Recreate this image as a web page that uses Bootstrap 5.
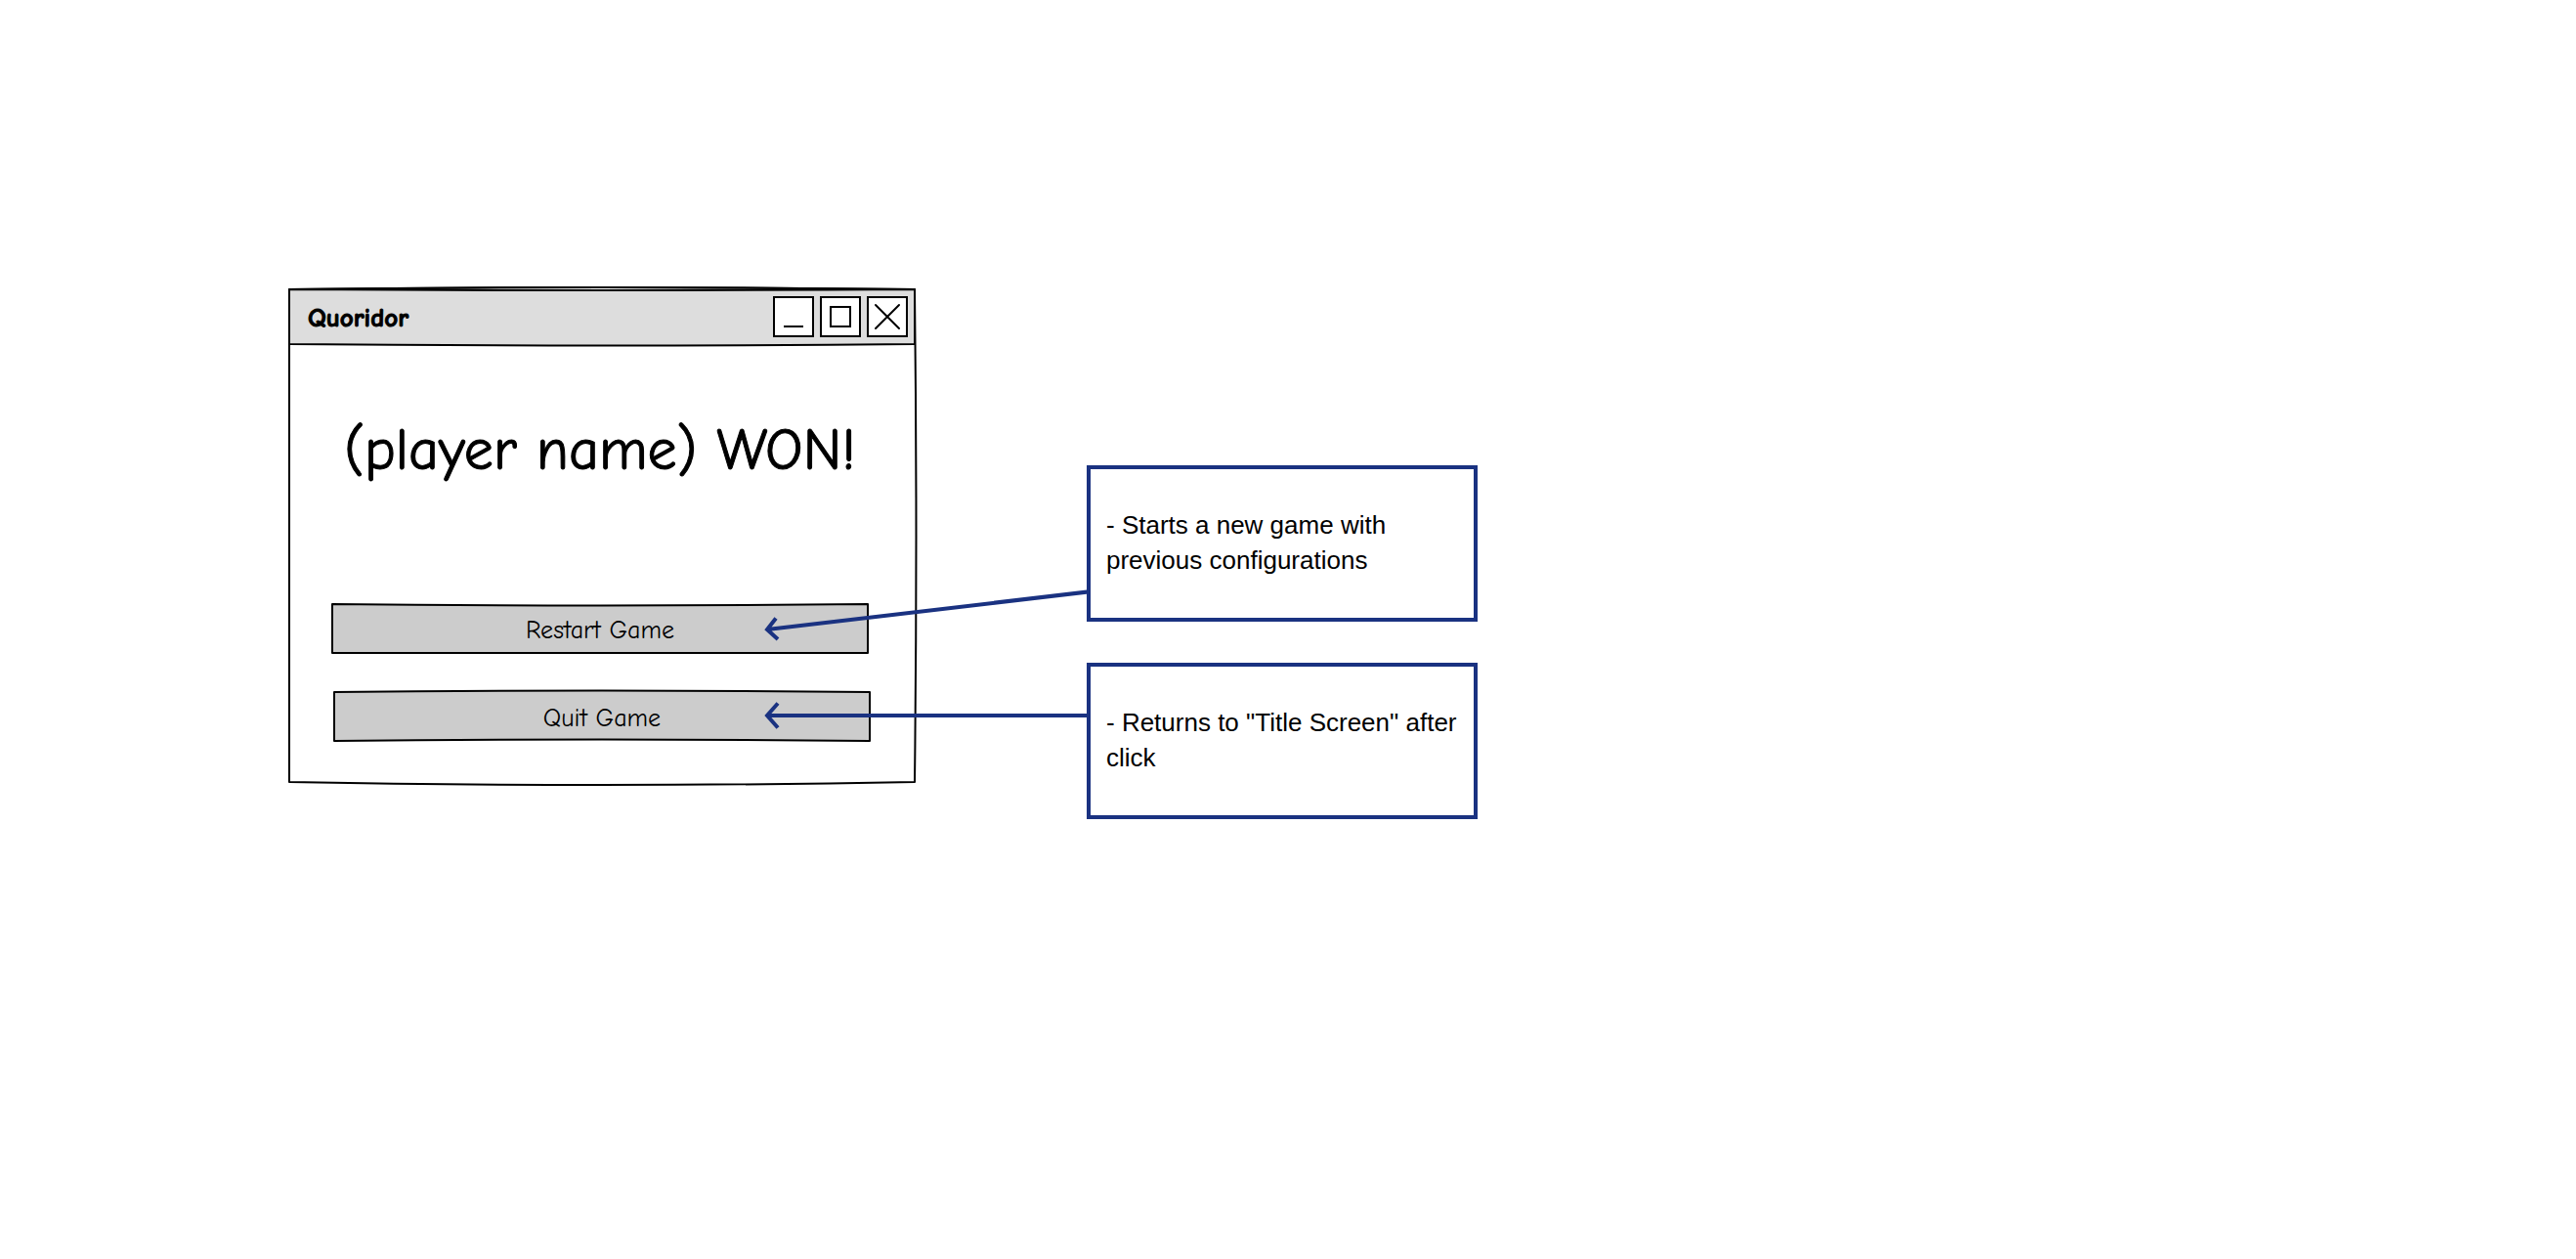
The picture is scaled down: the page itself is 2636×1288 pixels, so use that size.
<!DOCTYPE html>
<html lang="en">
<head>
<meta charset="utf-8">
<meta name="viewport" content="width=device-width, initial-scale=1">
<title>Quoridor</title>
<link href="https://cdn.jsdelivr.net/npm/bootstrap@5.3.0/dist/css/bootstrap.min.css" rel="stylesheet">
<style>
  :root { --ink: #000; --note: #1a3281; }
  body { color: var(--ink); background: #fff; }
  .board { padding: 295px 48px 48px 295px; gap: 175px; }
  .hand { font-family: "Comic Sans MS", "Comic Neue", Lato, sans-serif; }
  .dialog-win { flex: 0 1 642px; height: 507px; }
  .sketch { position: absolute; inset: 0; width: 100%; height: 100%; overflow: visible; pointer-events: none; }
  .sketch path { stroke: var(--ink); stroke-width: 2; vector-effect: non-scaling-stroke; stroke-linejoin: round; }
  .titlebar { height: 58px; padding: 0 8px 0 20px; gap: 6px; }
  .titlebar h1 { font-size: 27px; line-height: 36px; padding-top: 4px; -webkit-text-stroke: 1px var(--ink); }
  .win-btn { width: 42px; height: 42px; border: 2px solid var(--ink); background: #fff; }
  .win-btn svg { display: block; width: 38px; height: 38px; }
  .winner { font-size: 60px; line-height: 80px; margin: 68px 0 116px; padding-right: 4px; -webkit-text-stroke: 1px var(--ink); }
  .choice { height: 52px; width: 550px; max-width: 100%; font-size: 26px; line-height: 36px; color: var(--ink); }
  .choices { gap: 38px; padding: 0 44px; }
  .choices .choice + .choice { margin-left: 2px; }
  .notes { flex: 0 1 400px; margin-top: 181px; gap: 42px; }
  .note-box { height: 160px; border: 4px solid var(--note); padding: 0 12px 2px 16px; background: #fff;
    font-family: "Liberation Sans", Arial, sans-serif; font-size: 26px; line-height: 36px; }
  .pointers { position: absolute; top: 0; right: 100%; width: 332px; height: 362px; pointer-events: none; }
</style>
<script src="https://cdn.jsdelivr.net/npm/bootstrap@5.3.0/dist/js/bootstrap.bundle.min.js" defer></script>
</head>
<body>
<main class="board d-flex align-items-start">
  <section class="dialog-win hand position-relative" aria-labelledby="win-title">
    <svg class="sketch" viewBox="0 0 642 507" preserveAspectRatio="none" fill="none" aria-hidden="true">
      <path d="M1 1Q321-3 641 1Q644 253 641 505Q321 511 1 505Z" fill="#fff"/>
      <path d="M1 1Q321 3 641 1V57Q321 60 1 57Z" fill="#ddd"/>
      <path d="M1 1Q321-3 641 1"/>
    </svg>
    <header class="titlebar position-relative d-flex align-items-center">
      <h1 id="win-title" class="fw-bold mb-0 me-auto">Quoridor</h1>
      <button type="button" class="win-btn p-0" aria-label="Minimize">
        <svg viewBox="0 0 38 38" fill="none" stroke="#000" stroke-width="2"><path d="M9 29H29"/></svg>
      </button>
      <button type="button" class="win-btn p-0" aria-label="Maximize">
        <svg viewBox="0 0 38 38" fill="none" stroke="#000" stroke-width="2"><path d="M9 9H29V29H9Z"/></svg>
      </button>
      <button type="button" class="win-btn p-0" aria-label="Close">
        <svg viewBox="0 0 38 38" fill="none" stroke="#000" stroke-width="2" stroke-linecap="round"><path d="M7 7L31 31M31 7L7 31"/></svg>
      </button>
    </header>
    <p class="winner position-relative text-center text-nowrap">(player name) WON!</p>
    <div class="choices d-flex flex-column align-items-start">
      <button type="button" class="choice position-relative border-0 bg-transparent px-0 pb-0 pt-1">
        <svg class="sketch" viewBox="0 0 550 52" preserveAspectRatio="none" fill="#ccc" aria-hidden="true"><path d="M1 1Q275 4 549 1V51H1Z"/></svg>
        <span class="position-relative">Restart Game</span>
      </button>
      <button type="button" class="choice position-relative border-0 bg-transparent px-0 pb-0 pt-1">
        <svg class="sketch" viewBox="0 0 550 52" preserveAspectRatio="none" fill="#ccc" aria-hidden="true"><path d="M1 1Q275-2 549 1V51Q275 48 1 51Z"/></svg>
        <span class="position-relative">Quit Game</span>
      </button>
    </div>
  </section>
  <aside class="notes position-relative d-flex flex-column" aria-label="Notes">
    <div class="note-box d-flex align-items-center">- Starts a new game with previous configurations</div>
    <div class="note-box d-flex align-items-center">- Returns to "Title Screen" after click</div>
    <svg class="pointers" viewBox="0 0 332 362" fill="none" stroke="#1a3281" stroke-width="4" aria-hidden="true">
      <path d="M333 129.500L5 168M14 156.500L5 168L16 178"/>
      <path d="M333 256H5M16 243.500L5 256L16 268.500"/>
    </svg>
  </aside>
</main>
</body>
</html>
